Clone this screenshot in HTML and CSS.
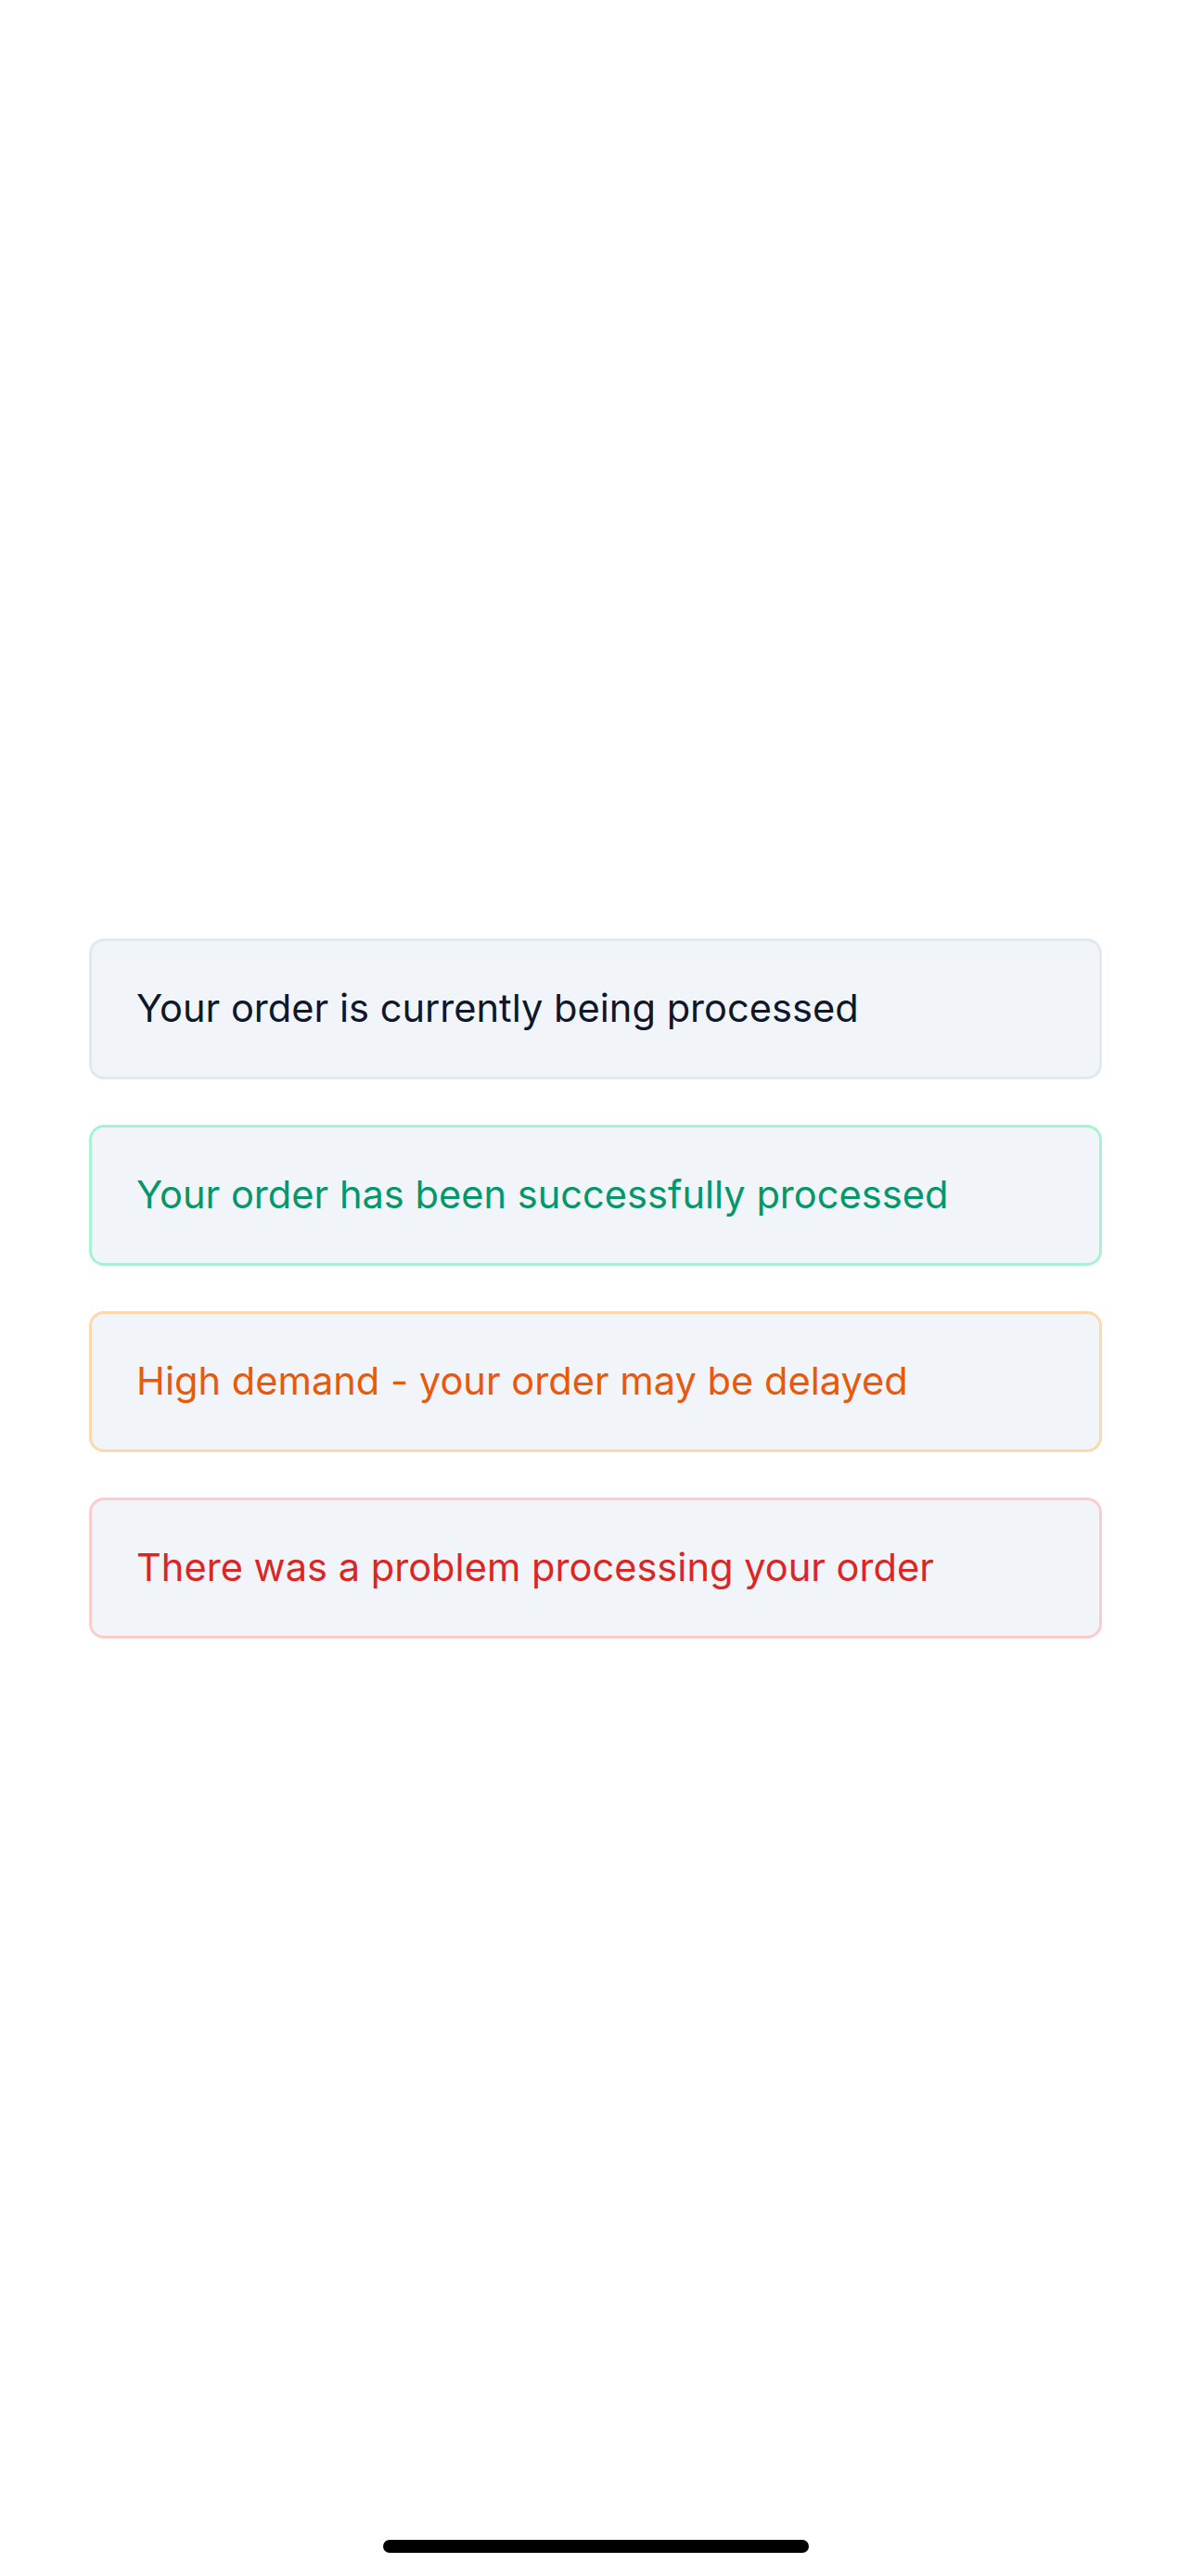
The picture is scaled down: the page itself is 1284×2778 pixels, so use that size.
FILE: index.html
```html
<!DOCTYPE html>
<html lang="en">
<head>
<meta charset="utf-8">
<title>Order status</title>
<link rel="stylesheet" href="styles.css">
</head>
<body>
<main class="screen">
  <div class="alerts">
    <div class="alert alert-info">Your order is currently being processed</div>
    <div class="alert alert-success">Your order has been successfully processed</div>
    <div class="alert alert-warning">High demand - your order may be delayed</div>
    <div class="alert alert-error">There was a problem processing your order</div>
  </div>
  <div class="home-indicator"></div>
</main>
</body>
</html>
```

FILE: styles.css
```css
html, body {
  margin: 0;
  padding: 0;
  background: #ffffff;
}

.screen {
  position: relative;
  width: 1284px;
  height: 2778px;
  box-sizing: border-box;
  padding: 0 96px;
  display: flex;
  flex-direction: column;
  justify-content: center;
  font-family: Inter, "Noto Sans", "Liberation Sans", sans-serif;
}

.alerts {
  display: flex;
  flex-direction: column;
  gap: 49px;
}

.alert {
  height: 152px;
  box-sizing: border-box;
  display: flex;
  align-items: center;
  padding: 0 48px;
  background: #f1f5f9;
  border: 3px solid #e2e8f0;
  border-radius: 16px;
  font-size: 41.6px;
  font-weight: 400;
  line-height: 1;
}

.alert-info {
  color: #0f172a;
}

.alert-success {
  color: #059669;
  border-color: #a7f3d0;
}

.alert-warning {
  color: #ea580c;
  border-color: #fed7aa;
}

.alert-error {
  color: #dc2626;
  border-color: #fecaca;
}

.home-indicator {
  position: absolute;
  left: 413px;
  bottom: 25px;
  width: 459px;
  height: 14px;
  border-radius: 7px;
  background: #000000;
}
```
